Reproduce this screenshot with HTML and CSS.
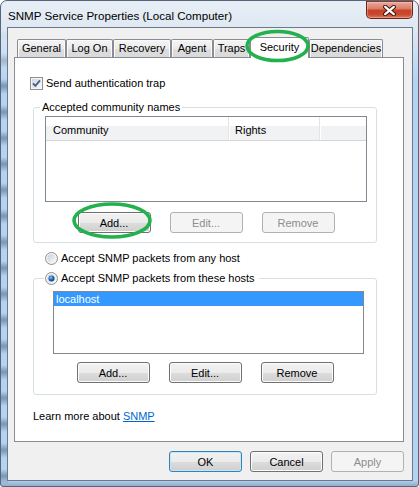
FILE: index.html
```html
<!DOCTYPE html>
<html lang="en">
<head>
<meta charset="utf-8">
<title>SNMP Service Properties</title>
<link rel="stylesheet" href="styles.css">
</head>
<body>
<div class="window">
  <div class="titlebar">
    <span class="title">SNMP Service Properties (Local Computer)</span>
    <div class="close">
      <svg width="13" height="11" viewBox="0 0 13 11">
        <path d="M2.2 1.8 L10.8 9.2 M10.8 1.8 L2.2 9.2" stroke="#43160d" stroke-width="4.2" stroke-linecap="round" fill="none"/>
        <path d="M2.2 1.8 L10.8 9.2 M10.8 1.8 L2.2 9.2" stroke="#ffffff" stroke-width="2.2" stroke-linecap="round" fill="none"/>
      </svg>
    </div>
  </div>
  <div class="client">
    <div class="tabs">
      <div class="tab tab-general">General</div>
      <div class="tab tab-logon">Log On</div>
      <div class="tab tab-recovery">Recovery</div>
      <div class="tab tab-agent">Agent</div>
      <div class="tab tab-traps">Traps</div>
      <div class="tab tab-security active">Security</div>
      <div class="tab tab-deps">Dependencies</div>
    </div>
    <div class="panel">
      <div class="check-row">
        <svg class="checkbox" width="13" height="13" viewBox="0 0 13 13">
          <defs>
            <linearGradient id="cbFill" x1="0" y1="0" x2="1" y2="1">
              <stop offset="0" stop-color="#d2d6dc"/>
              <stop offset="1" stop-color="#f8f8f8"/>
            </linearGradient>
          </defs>
          <rect x="0.5" y="0.5" width="12" height="12" fill="#f6f6f6" stroke="#8e8f8f"/>
          <rect x="2" y="2" width="9" height="9" fill="url(#cbFill)"/>
          <path d="M3 6.3 L5.4 8.9 L10 3.4" fill="none" stroke="#4a5f97" stroke-width="1.9"/>
        </svg>
        <span>Send authentication trap</span>
      </div>

      <fieldset class="group group-community">
        <legend class="group-legend">Accepted community names</legend>
        <div class="listview">
          <div class="lv-header">
            <div class="lv-col lv-col-community">Community</div>
            <div class="lv-col lv-col-rights">Rights</div>
            <div class="lv-col lv-col-rest"></div>
          </div>
        </div>
        <div class="btn-row">
          <button class="btn">Add...</button>
          <button class="btn" disabled>Edit...</button>
          <button class="btn" disabled>Remove</button>
        </div>
      </fieldset>

      <div class="radio-row">
        <svg class="radio" width="13" height="13" viewBox="0 0 13 13">
          <defs>
            <linearGradient id="rdFill1" x1="0" y1="0" x2="1" y2="1">
              <stop offset="0" stop-color="#c9ccd1"/>
              <stop offset="1" stop-color="#fbfbfb"/>
            </linearGradient>
          </defs>
          <circle cx="6.5" cy="6.5" r="6" fill="#f4f4f4" stroke="#8e8f8f"/>
          <circle cx="6.5" cy="6.5" r="4.3" fill="url(#rdFill1)"/>
        </svg>
        <span>Accept SNMP packets from any host</span>
      </div>

      <fieldset class="group group-hosts">
        <legend class="group-legend radio-legend">
          <svg class="radio" width="13" height="13" viewBox="0 0 13 13">
            <defs>
              <linearGradient id="rdFill2" x1="0" y1="0" x2="1" y2="1">
                <stop offset="0" stop-color="#c9ccd1"/>
                <stop offset="1" stop-color="#fbfbfb"/>
              </linearGradient>
              <radialGradient id="rdDot" cx="0.4" cy="0.35" r="0.7">
                <stop offset="0" stop-color="#8fd3ff"/>
                <stop offset="0.45" stop-color="#2a72c4"/>
                <stop offset="1" stop-color="#0c3470"/>
              </radialGradient>
            </defs>
            <circle cx="6.5" cy="6.5" r="6" fill="#f4f4f4" stroke="#8e8f8f"/>
            <circle cx="6.5" cy="6.5" r="4.3" fill="url(#rdFill2)"/>
            <circle cx="6.5" cy="6.5" r="3" fill="url(#rdDot)"/>
          </svg>
          <span>Accept SNMP packets from these hosts</span>
        </legend>
        <div class="listbox">
          <div class="lb-item selected">localhost</div>
        </div>
        <div class="btn-row btn-row-hosts">
          <button class="btn">Add...</button>
          <button class="btn">Edit...</button>
          <button class="btn">Remove</button>
        </div>
      </fieldset>

      <p class="learn">Learn more about <a href="#" class="link">SNMP</a></p>
    </div>
    <div class="actions">
      <button class="btn btn-default">OK</button>
      <button class="btn">Cancel</button>
      <button class="btn" disabled>Apply</button>
    </div>
  </div>

  <svg class="annotations" width="419" height="487" viewBox="0 0 419 487">
    <ellipse cx="277.5" cy="46" rx="30.5" ry="14.5" fill="none" stroke="#22b14c" stroke-width="3.6"/>
    <ellipse cx="112" cy="220.5" rx="38" ry="16.5" fill="none" stroke="#22b14c" stroke-width="3.6"/>
  </svg>
</div>
</body>
</html>
```

FILE: styles.css
```css
* {
  box-sizing: border-box;
}

html,
body {
  margin: 0;
  padding: 0;
}

body {
  width: 419px;
  height: 487px;
  overflow: hidden;
  background: #ffffff;
  font-family: "Liberation Sans", Arial, sans-serif;
  font-size: 11px;
  color: #000000;
}

.window {
  position: relative;
  width: 419px;
  height: 487px;
  display: flex;
  flex-direction: column;
  border: 1px solid #55667a;
  border-radius: 7px 7px 3px 3px;
  background-color: #b4d3f3;
  background-image:
    linear-gradient(to bottom, #e7eef6 0, #dfe8f2 28px, rgba(214, 228, 244, 0) 80px),
    repeating-linear-gradient(to bottom,
      rgba(66, 86, 112, 0) 0,
      rgba(66, 86, 112, 0.5) 7px,
      rgba(66, 86, 112, 0) 15px,
      rgba(66, 86, 112, 0) 26px),
    linear-gradient(to top, rgba(80, 100, 125, 0.35) 0, rgba(80, 100, 125, 0) 6px);
  background-size: 100% 100%, 7px 100%, 100% 100%;
  background-position: 0 0, 0 0, 0 0;
  background-repeat: no-repeat;
}

/* ---------- title bar ---------- */
.titlebar {
  height: 26px;
  flex: none;
  display: flex;
  justify-content: space-between;
  align-items: flex-start;
  padding: 0 5px 0 7px;
}

.title {
  margin-top: 8px;
  font-size: 11.6px;
  line-height: 14px;
  color: #000000;
  white-space: nowrap;
}

.close {
  width: 47px;
  height: 18px;
  display: flex;
  align-items: center;
  justify-content: center;
  border: 1px solid #6a2419;
  border-top-color: #8a3a2e;
  border-radius: 0 0 5px 5px;
  background: linear-gradient(to bottom, #eaaa9c 0, #db7b67 42%, #c4442a 52%, #c8492f 78%, #dd7b5e 100%);
  box-shadow: inset 0 0 0 1px rgba(255, 220, 210, 0.35);
}

/* ---------- client area ---------- */
.client {
  flex: 1;
  margin: 0 5px 5px 6px;
  border: 1px solid #6b7a8a;
  background: #f0f0f0;
  padding: 9px 8px 0 6px;
  display: flex;
  flex-direction: column;
}

.tabs {
  display: flex;
  align-items: flex-end;
  height: 20px;
  padding-left: 3px;
  position: relative;
  z-index: 1;
  flex: none;
}

.tab {
  height: 18px;
  line-height: 16px;
  text-align: center;
  white-space: nowrap;
  border: 1px solid #898c95;
  border-bottom: 0;
  border-radius: 2px 2px 0 0;
  background: linear-gradient(to bottom, #f4f4f4 0, #ebebeb 50%, #dedede 51%, #d9d9d9 100%);
  box-shadow: inset 1px 1px 0 #fbfbfb, inset -1px 0 0 #fbfbfb;
}

.tab-general { width: 49px; }
.tab-logon { width: 47px; }
.tab-recovery { width: 58px; }
.tab-agent { width: 42px; }
.tab-traps { width: 37px; }
.tab-deps { width: 74px; }

.tab.active {
  width: 59px;
  height: 21px;
  line-height: 18px;
  margin-bottom: -1px;
  background: #ffffff;
  box-shadow: none;
}

.panel {
  height: 385px;
  flex: none;
  border: 1px solid #898c95;
  background: #ffffff;
  padding: 19px 26px 0 15px;
}

.check-row,
.radio-row {
  display: flex;
  align-items: center;
  gap: 3px;
  height: 13px;
  line-height: 13px;
  white-space: nowrap;
}

.checkbox,
.radio {
  flex: none;
  display: block;
}

/* ---------- group boxes ---------- */
.group {
  margin: 0 0 0 3px;
  min-width: 0;
  border: 1px solid #d5dfe5;
  border-radius: 3px;
  box-shadow: inset 1px 1px 0 #ffffff;
}

.group-legend {
  line-height: 13px;
  padding: 0 2px;
  white-space: nowrap;
}

.group-community {
  margin-top: 11px;
  padding: 2px 9px 9px 11px;
}

.group-community .group-legend {
  margin-left: -5px;
}

.group-hosts {
  margin-top: 7px;
  padding: 6px 12px 11px 19px;
}

.radio-legend {
  display: flex;
  align-items: center;
  gap: 3px;
  margin-left: -9px;
  padding: 0 4px 0 1px;
}

.radio-row {
  margin: 9px 0 0 15px;
}

/* ---------- list view ---------- */
.listview {
  height: 86px;
  border: 1px solid #828790;
  background: #ffffff;
}

.lv-header {
  display: flex;
  height: 24px;
  background: linear-gradient(to bottom, #ffffff 0, #ffffff 38%, #f1f2f4 40%, #f1f2f4 100%);
  border-bottom: 1px solid #d5d5d5;
}

.lv-col {
  height: 23px;
  line-height: 13px;
  padding: 7px 0 0 7px;
  border-right: 1px solid #e3e4e8;
  box-shadow: 1px 0 0 #ffffff;
  white-space: nowrap;
}

.lv-col-community { width: 183px; }
.lv-col-rights { width: 91px; padding-left: 6px; }
.lv-col-rest { flex: 1; border-right: 0; box-shadow: none; }

/* ---------- list box ---------- */
.listbox {
  height: 63px;
  border: 1px solid #828790;
  background: #ffffff;
}

.lb-item {
  height: 14px;
  line-height: 14px;
  padding-left: 2px;
}

.lb-item.selected {
  background: #3399ff;
  color: #ffffff;
}

/* ---------- buttons ---------- */
.btn-row {
  display: flex;
  justify-content: center;
  gap: 19px;
  margin-top: 10px;
}

.btn-row-hosts {
  margin-top: 8px;
  margin-left: -7px;
}

.btn {
  width: 73px;
  height: 21px;
  padding: 0;
  font-family: inherit;
  font-size: 11px;
  color: #000000;
  border: 1px solid #707070;
  border-radius: 3px;
  background: linear-gradient(to bottom, #f2f2f2 0, #ebebeb 50%, #dddddd 51%, #cfcfcf 100%);
  box-shadow: inset 0 0 0 1px #fcfcfc;
}

.btn:disabled {
  border-color: #adb2b5;
  background: #f4f4f4;
  color: #8d8d8d;
  box-shadow: none;
}

.btn-default {
  border-color: #3c7fb1;
  box-shadow: inset 0 0 0 1px #bfe8fb;
}

/* ---------- footer ---------- */
.learn {
  margin: 15px 0 0 3px;
  line-height: 13px;
  white-space: nowrap;
}

.link {
  color: #0066cc;
  text-decoration: underline;
}

.actions {
  display: flex;
  justify-content: flex-end;
  gap: 8px;
  margin-top: 9px;
  flex: none;
}

/* ---------- annotation overlay ---------- */
.annotations {
  position: absolute;
  left: -1px;
  top: -1px;
  pointer-events: none;
  z-index: 5;
}
```
